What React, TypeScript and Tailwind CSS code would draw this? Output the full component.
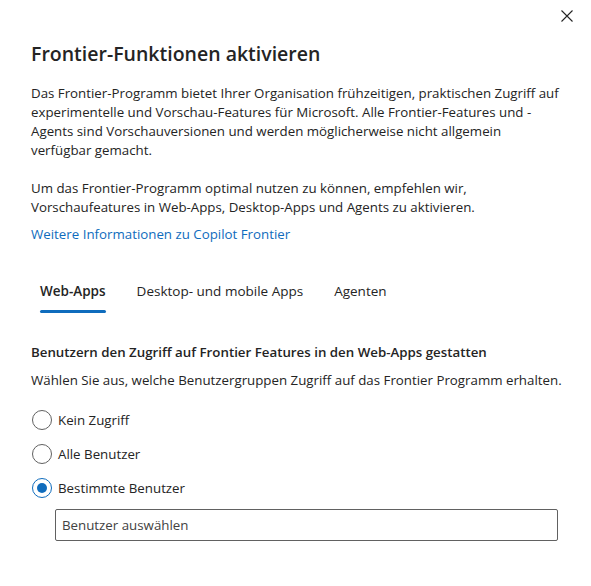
import { useState } from "react";

const tabs = ["Web-Apps", "Desktop- und mobile Apps", "Agenten"];
const options = ["Kein Zugriff", "Alle Benutzer", "Bestimmte Benutzer"];

function Radio({ checked }: { checked: boolean }) {
  return (
    <span
      className={
        "flex h-5 w-5 shrink-0 items-center justify-center rounded-full border " +
        (checked ? "border-[#0f6cbd]" : "border-[#616161]")
      }
    >
      {checked && <span className="h-[10px] w-[10px] rounded-full bg-[#0f6cbd]" />}
    </span>
  );
}

export default function App() {
  const [tab, setTab] = useState(0);
  const [choice, setChoice] = useState(2);

  return (
    <div className="relative h-[586px] w-[591px] overflow-hidden bg-white font-['Open_Sans',sans-serif] text-[13.3px] text-[#242424]">
      {/* close */}
      <button className="absolute right-[12px] top-[4px] flex h-6 w-6 items-center justify-center">
        <svg width="12" height="12" viewBox="0 0 12 12">
          <path d="M0.5 0.5L11.5 11.5M11.5 0.5L0.5 11.5" stroke="#242424" strokeWidth="1.1" />
        </svg>
      </button>

      <div className="pl-[31px] pr-8 pt-10">
        <h1 className="text-[19.5px] font-semibold leading-[28px]">Frontier-Funktionen aktivieren</h1>

        <div className="mt-4 leading-[19px] whitespace-nowrap">
          <p>
            Das Frontier-Programm bietet Ihrer Organisation frühzeitigen, praktischen Zugriff auf
            <br />
            experimentelle und Vorschau-Features für Microsoft. Alle Frontier-Features und -
            <br />
            Agents sind Vorschauversionen und werden möglicherweise nicht allgemein
            <br />
            verfügbar gemacht.
          </p>
          <p className="mt-[19px]">
            Um das Frontier-Programm optimal nutzen zu können, empfehlen wir,
            <br />
            Vorschaufeatures in Web-Apps, Desktop-Apps und Agents zu aktivieren.
          </p>
        </div>

        <a className="mt-2 block leading-[19px] text-[#0f6cbd]" href="#">
          Weitere Informationen zu Copilot Frontier
        </a>

        {/* tabs */}
        <div className="mt-[37px] flex gap-[31px] pl-[9px] text-[13.5px]">
          {tabs.map((t, i) => (
            <button key={t} onClick={() => setTab(i)} className="flex flex-col items-stretch">
              <span className={"leading-5 " + (tab === i ? "font-semibold" : "")}>{t}</span>
              <span
                className={
                  "mt-[9px] h-[3px] rounded-full " + (tab === i ? "bg-[#0f6cbd]" : "bg-transparent")
                }
              />
            </button>
          ))}
        </div>

        <h2 className="mt-[29px] font-semibold leading-5">
          Benutzern den Zugriff auf Frontier Features in den Web-Apps gestatten
        </h2>
        <p className="mt-2 whitespace-nowrap leading-5">
          Wählen Sie aus, welche Benutzergruppen Zugriff auf das Frontier Programm erhalten.
        </p>

        <div className="mt-5 flex flex-col gap-[14px]">
          {options.map((o, i) => (
            <label key={o} onClick={() => setChoice(i)} className="ml-[1px] flex h-5 items-center gap-[6px]">
              <Radio checked={choice === i} />
              <span className="leading-5">{o}</span>
            </label>
          ))}
        </div>

        <input
          className="ml-[24px] mt-[11px] block h-8 w-[503px] rounded-[2px] border border-[#616161] px-[6px] text-[13.3px] text-[#242424] outline-none placeholder:text-[#424242]"
          placeholder="Benutzer auswählen"
        />
      </div>
    </div>
  );
}
